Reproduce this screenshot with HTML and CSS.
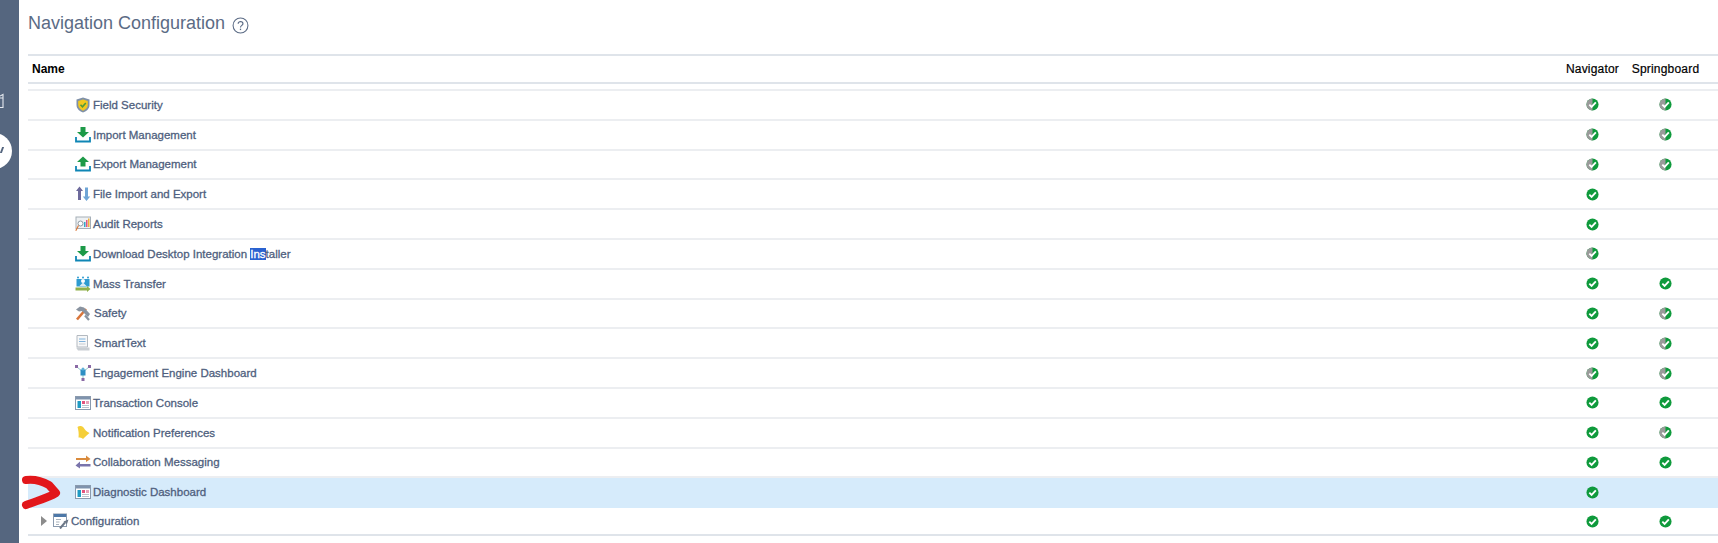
FILE: index.html

```html
<!DOCTYPE html>
<html lang="en">
<head>
    <meta charset="UTF-8">
    <title>Navigation Configuration</title>
    <link rel="stylesheet" href="styles.css">
</head>
<body>
    <svg width="0" height="0" class="defs">
        <defs>
            <symbol id="ok" viewBox="0 0 14 14">
                <circle cx="7" cy="7" r="6.500" fill="#0f9a3c"/>
                <path d="M3.600 7.200 6 9.600 10.600 4.600" fill="none" stroke="#fff" stroke-width="2"/>
            </symbol>
            <symbol id="half" viewBox="0 0 14 14">
                <circle cx="7" cy="7" r="6.500" fill="#0f9a3c"/>
                <path d="M7 .5A6.500 6.500 0 0 0 7 13.500Z" fill="#9a9a9a"/>
                <path d="M3.600 7.200 6 9.600 10.600 4.600" fill="none" stroke="#fff" stroke-width="2"/>
            </symbol>
            <symbol id="dash" viewBox="0 0 16 16">
                <rect x=".5" y="1.500" width="15" height="13" fill="#fff" stroke="#8a9aae"/>
                <rect x="1" y="2" width="14" height="2.500" fill="#7f93ad"/>
                <rect x="2.500" y="6" width="3.500" height="7" fill="#1f9bc4"/>
                <rect x="7" y="6" width="3" height="3" fill="#e2557f"/>
                <rect x="11" y="6" width="3" height="3" fill="#e9a0b8"/>
                <rect x="7" y="10" width="7" height="1" fill="#b9c2cc"/>
                <rect x="7" y="12" width="7" height="1" fill="#b9c2cc"/>
            </symbol>
            <symbol id="down" viewBox="0 0 16 16">
                <path d="M5.500 0h5v5H14L8 10.500 2 5h3.500Z" fill="#1d9a48"/>
                <path d="M1 10v4.500h14V10" fill="none" stroke="#0f86b5" stroke-width="1.800"/>
            </symbol>
            <symbol id="up" viewBox="0 0 16 16">
                <path d="M5.500 10.500h5V6H14L8 .5 2 6h3.500Z" fill="#1d9a48"/>
                <path d="M1 10v4.500h14V10" fill="none" stroke="#0f86b5" stroke-width="1.800"/>
            </symbol>
        </defs>
    </svg>

    <div class="page">
        <aside class="side">
            <svg class="side-icon" width="4" height="15" viewBox="0 0 4 15"><path d="M0 3 3 1.500V14.500H0M0 5H3" fill="none" stroke="#e6eaf0" stroke-width="1.100"/></svg>
            <div class="side-toggle"><span class="side-mark"></span></div>
        </aside>

        <main class="main">
            <h1 class="title">Navigation Configuration
                <svg class="help" width="17" height="17" viewBox="0 0 16 16">
                    <circle cx="8" cy="8" r="7" fill="none" stroke="#5b6b85" stroke-width="1"/>
                    <path d="M5.800 6.300C5.800 3.800 10.300 3.800 10.300 6.300 10.300 8 8 7.800 8 9.800" fill="none" stroke="#5b6b85" stroke-width="1.100"/>
                    <rect x="7.400" y="11" width="1.200" height="1.300" fill="#5b6b85"/>
                </svg>
            </h1>

            <div class="table">
                <div class="row head">
                    <div class="name">Name</div>
                    <div class="col">Navigator</div>
                    <div class="col">Springboard</div>
                </div>

                <div class="rows">
                    <div class="row item">
                        <div class="name">
                            <svg class="icon" viewBox="0 0 16 16"><path d="M8 .5 14.500 2.500V8C14.500 12 11 14.500 8 15.500 5 14.500 1.500 12 1.500 8V2.500Z" fill="#7f90a8"/><path d="M8 2.500 12.800 4V8C12.800 10.800 10.300 12.800 8 13.700 5.700 12.800 3.200 10.800 3.200 8V4Z" fill="#f2c81e"/><path d="M5.500 7.800 7.500 9.800 10.800 6" fill="none" stroke="#4f9a3a" stroke-width="1.600"/></svg>
                            Field Security
                        </div>
                        <div class="col"><svg class="st"><use href="#half"/></svg></div>
                        <div class="col"><svg class="st"><use href="#half"/></svg></div>
                    </div>
                    <div class="row item">
                        <div class="name"><svg class="icon"><use href="#down"/></svg>Import Management</div>
                        <div class="col"><svg class="st"><use href="#half"/></svg></div>
                        <div class="col"><svg class="st"><use href="#half"/></svg></div>
                    </div>
                    <div class="row item">
                        <div class="name"><svg class="icon"><use href="#up"/></svg>Export Management</div>
                        <div class="col"><svg class="st"><use href="#half"/></svg></div>
                        <div class="col"><svg class="st"><use href="#half"/></svg></div>
                    </div>
                    <div class="row item">
                        <div class="name">
                            <svg class="icon" viewBox="0 0 16 16"><path d="M4.500 .5 8 5H6V14H3V5H1Z" fill="#6d6a9c"/><path d="M11.500 15 15.200 10.500H13V1.500H10V10.500H7.800Z" fill="#6fa5d6"/></svg>
                            File Import and Export
                        </div>
                        <div class="col"><svg class="st"><use href="#ok"/></svg></div>
                        <div class="col"></div>
                    </div>
                    <div class="row item">
                        <div class="name">
                            <svg class="icon" viewBox="0 0 16 16"><rect x="1" y="1" width="14.500" height="11.500" fill="#eef1f3" stroke="#a5afb8"/><circle cx="5.500" cy="7.500" r="2.500" fill="#fff" stroke="#8e99a3"/><path d="M3.500 9.500 .8 14.800" stroke="#dd7a3c" stroke-width="1.200"/><rect x="9" y="6" width="1.500" height="5" fill="#35a7c9"/><rect x="11" y="4" width="1.500" height="7" fill="#e2557f"/><rect x="13" y="2.500" width="1.500" height="8.500" fill="#f0b13c"/></svg>
                            Audit Reports
                        </div>
                        <div class="col"><svg class="st"><use href="#ok"/></svg></div>
                        <div class="col"></div>
                    </div>
                    <div class="row item">
                        <div class="name"><svg class="icon"><use href="#down"/></svg><span>Download Desktop Integration <span class="sel">Ins</span>taller</span></div>
                        <div class="col"><svg class="st"><use href="#half"/></svg></div>
                        <div class="col"></div>
                    </div>
                    <div class="row item">
                        <div class="name">
                            <svg class="icon" viewBox="0 0 16 16"><rect x="1.500" y="3" width="13" height="7.500" fill="#2e9bd0"/><circle cx="8" cy="5" r="2" fill="#fff"/><path d="M4.500 10 8 6.500 11.500 10Z" fill="#dcecf5"/><circle cx="3" cy="1.500" r="1" fill="#2e9bd0"/><circle cx="8" cy="1.500" r="1" fill="#2e9bd0"/><circle cx="13" cy="1.500" r="1" fill="#2e9bd0"/><path d="M.5 11.500H12V10L15.500 13 12 16V14.500H.5Z" fill="#8fb04a"/></svg>
                            Mass Transfer
                        </div>
                        <div class="col"><svg class="st"><use href="#ok"/></svg></div>
                        <div class="col"><svg class="st"><use href="#ok"/></svg></div>
                    </div>
                    <div class="row item">
                        <div class="name shift">
                            <svg class="icon" viewBox="0 0 16 16"><path d="M2 14.500 11 4" stroke="#d9753a" stroke-width="2.600"/><path d="M1 4.500 5 1.500 9 2.500 15 9 13 12 7 6 4 6.500Z" fill="#8993a0"/><path d="M10 10.500 14 15" stroke="#8993a0" stroke-width="2.200"/></svg>
                            Safety
                        </div>
                        <div class="col"><svg class="st"><use href="#ok"/></svg></div>
                        <div class="col"><svg class="st"><use href="#half"/></svg></div>
                    </div>
                    <div class="row item">
                        <div class="name shift">
                            <svg class="icon" viewBox="0 0 16 16"><path d="M2 .5H12.500V12H2Z" fill="#f7f8f9" stroke="#b3b9c0"/><path d="M4 4H10.500M4 6.500H10.500" stroke="#7fb2dc"/><path d="M4 9H10.500" stroke="#c5cad0"/><path d="M1 12.500H14.500V15.500H3Z" fill="#c9ced3"/></svg>
                            SmartText
                        </div>
                        <div class="col"><svg class="st"><use href="#ok"/></svg></div>
                        <div class="col"><svg class="st"><use href="#half"/></svg></div>
                    </div>
                    <div class="row item">
                        <div class="name">
                            <svg class="icon" viewBox="0 0 16 16"><path d="M2 2 8 7 14 2M8 7V14" stroke="#8fc7c9" fill="none"/><rect x="0" y="0" width="3" height="3" fill="#8a6aa5"/><rect x="13" y="0" width="3" height="3" fill="#8a6aa5"/><rect x="6.500" y="13" width="3" height="3" fill="#8a6aa5"/><rect x="5.500" y="4.500" width="5" height="6" fill="#2e8fc4"/><circle cx="8" cy="4" r="1.500" fill="#5fb0d8"/></svg>
                            Engagement Engine Dashboard
                        </div>
                        <div class="col"><svg class="st"><use href="#half"/></svg></div>
                        <div class="col"><svg class="st"><use href="#half"/></svg></div>
                    </div>
                    <div class="row item">
                        <div class="name"><svg class="icon"><use href="#dash"/></svg>Transaction Console</div>
                        <div class="col"><svg class="st"><use href="#ok"/></svg></div>
                        <div class="col"><svg class="st"><use href="#ok"/></svg></div>
                    </div>
                    <div class="row item">
                        <div class="name">
                            <svg class="icon" viewBox="0 0 16 16"><path d="M2.500 2C4 .5 7 .5 8.500 2.500 10 4.500 11 6.500 14.500 8 12 10 10 12 8 14 7 12.500 5 12.500 3.500 12.500 4 9 3.500 5 2.500 2Z" fill="#f5cf3a"/></svg>
                            Notification Preferences
                        </div>
                        <div class="col"><svg class="st"><use href="#ok"/></svg></div>
                        <div class="col"><svg class="st"><use href="#half"/></svg></div>
                    </div>
                    <div class="row item">
                        <div class="name">
                            <svg class="icon" viewBox="0 0 16 16"><path d="M1 4H11V1.500L15.500 5 11 8V6H1Z" fill="#d98a3c"/><path d="M15.500 10H5V7.500L.5 11.500 5 14.500V12.500H15.500Z" fill="#7a74ab"/></svg>
                            Collaboration Messaging
                        </div>
                        <div class="col"><svg class="st"><use href="#ok"/></svg></div>
                        <div class="col"><svg class="st"><use href="#ok"/></svg></div>
                    </div>
                    <div class="row item active">
                        <div class="name"><svg class="icon"><use href="#dash"/></svg>Diagnostic Dashboard</div>
                        <div class="col"><svg class="st"><use href="#ok"/></svg></div>
                        <div class="col"></div>
                    </div>
                    <div class="row item last">
                        <div class="name top">
                            <span class="caret"></span>
                            <svg class="icon" viewBox="0 0 16 16"><rect x=".5" y="1" width="13" height="12.500" fill="#fff" stroke="#8a9aae"/><rect x="1" y="1" width="12" height="3" fill="#4d78a8"/><path d="M3 6.500H8M3 9H6.500M3 11.500H6" stroke="#a8b2bc"/><path d="M7 15.500 12 9.500" stroke="#6b7686" stroke-width="2"/><path d="M10.500 8.500 15.500 6.500 14 11Z" fill="#6b7686"/></svg>
                            Configuration
                        </div>
                        <div class="col"><svg class="st"><use href="#ok"/></svg></div>
                        <div class="col"><svg class="st"><use href="#ok"/></svg></div>
                    </div>
                </div>
            </div>
        </main>
    </div>

    <svg class="scribble" width="46" height="42" viewBox="0 0 46 42">
        <path d="M6 8C14 7 22 9 29 13L36 21C28 26 16 29 6 33" fill="none" stroke="#e2171b" stroke-width="8" stroke-linecap="round" stroke-linejoin="round"/>
    </svg>
</body>
</html>
```

FILE: styles.css

```css
* {
    margin: 0;
    padding: 0;
    box-sizing: border-box;
}

body {
    font-family: "Liberation Sans", Arial, sans-serif;
    background-color: #fff;
    color: #4f5f7e;
    height: 543px;
    overflow: hidden;
}

.defs {
    position: absolute;
}

.page {
    display: flex;
    height: 543px;
}

.side {
    width: 19px;
    flex-shrink: 0;
    background-color: #55667f;
    padding-top: 93px;
    overflow: hidden;
}

.side-icon {
    display: block;
}

.side-toggle {
    width: 36px;
    height: 36px;
    margin: 25px 0 0 -24px;
    background-color: #fff;
    border-radius: 50%;
    position: relative;
}

.side-mark {
    position: absolute;
    left: 24px;
    top: 14px;
    width: 3px;
    height: 6px;
    border-right: 2px solid #55667f;
    transform: skewX(-20deg);
}

.main {
    flex: 1;
    padding: 0 16px 0 9px;
}

.title {
    display: flex;
    align-items: center;
    gap: 7px;
    height: 54px;
    padding-bottom: 7px;
    font-size: 18px;
    font-weight: normal;
    color: #5b6b85;
}

.help {
    margin-top: 3px;
}

.table {
    border-top: 2px solid #dfe4ea;
    margin-right: -16px;
}

.row {
    display: flex;
    align-items: center;
    padding-right: 16px;
}

.name {
    flex: 1;
    display: flex;
    align-items: center;
    font-size: 11.5px;
    -webkit-text-stroke: 0.3px #4f5f7e;
    padding-left: 47px;
}

.shift .icon {
    margin-right: 3px;
}

.top {
    padding-left: 13px;
}

.col {
    width: 73px;
    display: flex;
    justify-content: center;
    font-size: 12px;
}

.head {
    height: 28px;
    border-bottom: 2px solid #dfe4ea;
    color: #000;
}

.head .name {
    padding-left: 4px;
    font-size: 12px;
    font-weight: bold;
    -webkit-text-stroke: 0;
}

.head .col {
    letter-spacing: 0.2px;
    -webkit-text-stroke: 0.2px #000;
}

.rows {
    margin-top: 5px;
    border-top: 2px solid #eceef1;
}

.item {
    height: 29.8px;
    border-bottom: 2px solid #eceef1;
}

.active {
    background-color: #d6ebfb;
    border-bottom-color: #d6ebfb;
}

.last {
    height: 28px;
    border-bottom-color: #dfe4ea;
}

.icon {
    width: 16px;
    height: 16px;
    margin-right: 2px;
    flex-shrink: 0;
}

.st {
    width: 13px;
    height: 13px;
}

.sel {
    background-color: #2a62d0;
    color: #fff;
    -webkit-text-stroke: 0.3px #fff;
}

.caret {
    width: 0;
    height: 0;
    border-left: 6px solid #8c8c8c;
    border-top: 5px solid transparent;
    border-bottom: 5px solid transparent;
    margin-right: 6px;
}

.scribble {
    position: absolute;
    left: 20px;
    top: 472px;
}
```
